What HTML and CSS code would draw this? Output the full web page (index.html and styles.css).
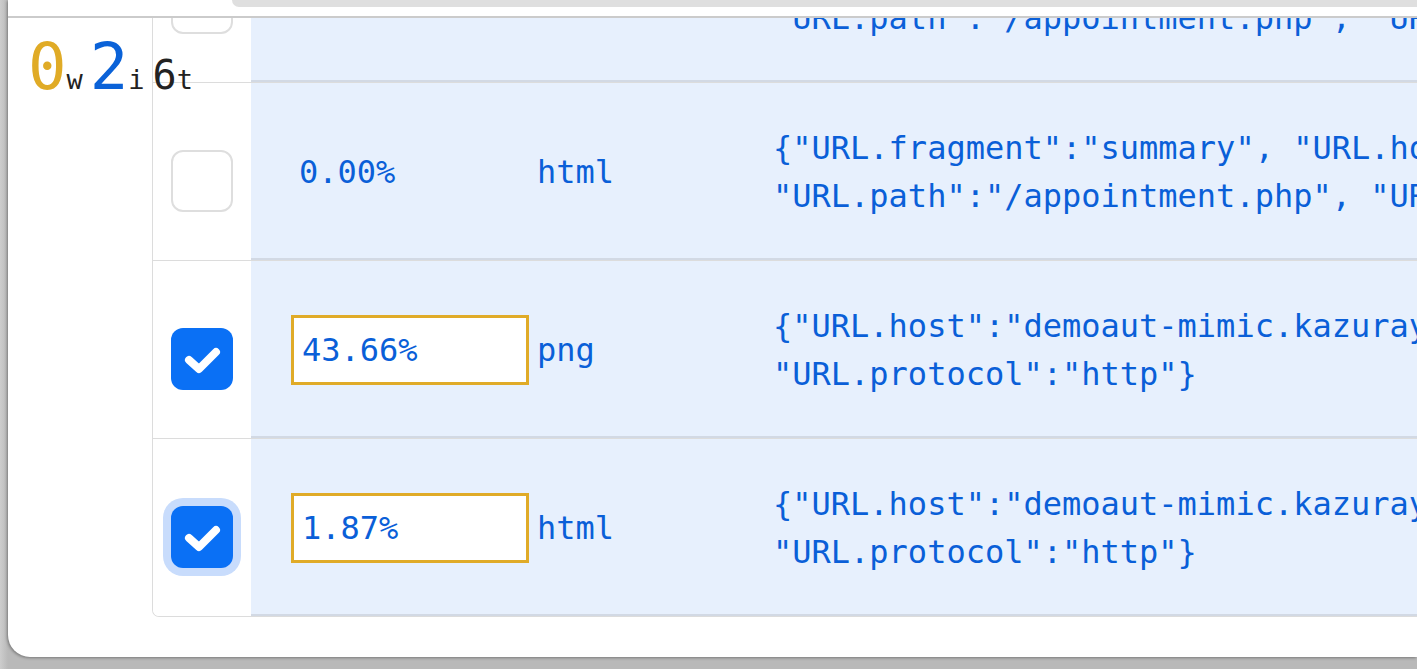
FILE: index.html
```html
<!DOCTYPE html>
<html>
<head>
<meta charset="utf-8">
<link rel="stylesheet" href="styles.css">
</head>
<body>
<div class="window">
  <div class="titlebar"><div class="tab"></div></div>
  <div class="main">
    <aside class="summary"><span class="n warn">0</span><span class="u">w</span><span class="n info">2</span><span class="u">i</span><span class="n total">6</span><span class="u">t</span></aside>
    <div class="scroller">
      <div class="tablebox">
        <table>
          <tr>
            <td class="sel"><span class="cb"></span></td>
            <td class="c pct"><span class="val">0.00%</span></td>
            <td class="c type">html</td>
            <td class="c json">{"URL.fragment":"summary", "URL.host":"demoaut-mimic.kazurayam.com",<br>"URL.path":"/appointment.php", "URL.protocol":"http"}</td>
          </tr>
          <tr>
            <td class="sel"><span class="cb"></span></td>
            <td class="c pct"><span class="val">0.00%</span></td>
            <td class="c type">html</td>
            <td class="c json">{"URL.fragment":"summary", "URL.host":"demoaut-mimic.kazurayam.com",<br>"URL.path":"/appointment.php", "URL.protocol":"http"}</td>
          </tr>
          <tr>
            <td class="sel"><span class="cb on"><svg viewBox="0 0 62 62" width="62" height="62"><path d="M18 32 L28 41 L45 24" fill="none" stroke="#fff" stroke-width="8" stroke-linecap="round" stroke-linejoin="round"/></svg></span></td>
            <td class="c pct"><input class="pv" type="text" value="43.66%"></td>
            <td class="c type">png</td>
            <td class="c json">{"URL.host":"demoaut-mimic.kazurayam.com", "URL.path":"/img/header.png",<br>"URL.protocol":"http"}</td>
          </tr>
          <tr>
            <td class="sel"><span class="cb on focus"><svg viewBox="0 0 62 62" width="62" height="62"><path d="M18 32 L28 41 L45 24" fill="none" stroke="#fff" stroke-width="8" stroke-linecap="round" stroke-linejoin="round"/></svg></span></td>
            <td class="c pct"><input class="pv" type="text" value="1.87%"></td>
            <td class="c type">html</td>
            <td class="c json">{"URL.host":"demoaut-mimic.kazurayam.com", "URL.path":"/appointment.php",<br>"URL.protocol":"http"}</td>
          </tr>
        </table>
      </div>
    </div>
  </div>
</div>
</body>
</html>
```
FILE: styles.css
```css
html, body {
  margin: 0;
  height: 669px;
  overflow: hidden;
}
body {
  background: linear-gradient(90deg, #cdcdcd 0, #b9b9b9 8px);
  font-family: "DejaVu Sans Mono", monospace;
}
.window {
  margin-left: 8px;
  height: 657px;
  background: #fff;
  border-bottom-left-radius: 22px;
  box-shadow: -1px 1px 3px rgba(0, 0, 0, 0.35);
  display: flex;
  flex-direction: column;
  overflow: hidden;
}
.titlebar {
  flex: none;
  height: 16px;
  border-bottom: 2px solid #cbcbcb;
}
.tab {
  margin-left: 224px;
  height: 7px;
  background: #dfdfdf;
  border-bottom-left-radius: 14px;
}
.main {
  flex: 1;
  display: flex;
  min-height: 0;
}
.summary {
  flex: none;
  width: 144px;
  box-sizing: border-box;
  padding: 17px 0 0 20px;
  white-space: nowrap;
  font-size: 64px;
  line-height: 64px;
  position: relative;
  z-index: 1;
}
.summary .n { font-size: 64px; }
.summary .warn { color: #e0ab26; }
.summary .info { color: #0a62d8; margin-left: 7px; }
.summary .total { font-size: 40px; color: #222; margin-left: 8px; }
.summary .u { font-size: 27px; color: #222; }
.scroller {
  flex: 1;
  overflow: hidden;
}
.tablebox {
  margin-top: -114px;
  width: max-content;
  border: 1px solid #dcdcdc;
  border-right: none;
  border-bottom-left-radius: 7px;
  overflow: hidden;
}
table {
  border-collapse: separate;
  border-spacing: 0;
  font-size: 32px;
  line-height: 48px;
  color: #0a5fd8;
}
td {
  height: 178px;
  padding: 0;
  box-sizing: border-box;
  border-bottom: 1px solid #dcdcdc;
  vertical-align: middle;
}
tr:last-child td { border-bottom: none; height: 177px; }
td.c {
  background: #e7f0fd;
  box-shadow: inset 0 -2px 0 #d2d9e4;
}
td.sel {
  width: 98px;
  background: #fff;
}
.cb {
  display: block;
  width: 62px;
  height: 62px;
  margin: 18px auto 0;
  box-sizing: border-box;
  border-radius: 12px;
  border: 2px solid #dedede;
  background: #fff;
}
.cb.on {
  border: none;
  background: #0a70f5;
}
.cb svg { display: block; }
.cb.focus { box-shadow: 0 0 0 8px #c8dcfc; }
td.pct {
  width: 286px;
  padding-left: 40px;
}
.val { padding-left: 8px; }
.pv {
  display: block;
  width: 238px;
  height: 70px;
  box-sizing: border-box;
  border: 3px solid #e0ab28;
  border-radius: 0;
  padding: 0 0 0 8px;
  margin: 0;
  background: #fff;
  color: #0a5fd8;
  font-family: "DejaVu Sans Mono", monospace;
  font-size: 32px;
  outline: none;
}
td.type { width: 236px; }
td.json {
  white-space: nowrap;
  padding-right: 60px;
}
```
